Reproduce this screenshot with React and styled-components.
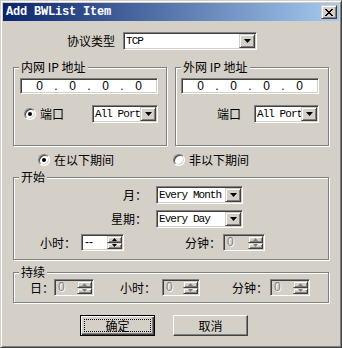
import React from 'react';
import styled, { createGlobalStyle, css } from 'styled-components';

const CJK = `"Noto Sans CJK SC", "Liberation Sans", sans-serif`;
const MONO = `"Liberation Mono", "Noto Sans CJK SC", monospace`;

const GlobalStyle = createGlobalStyle`
  html, body {
    margin: 0;
    padding: 0;
    background: #d4d0c8;
  }
`;

const raised = css`
  border: 1px solid;
  border-color: #d4d0c8 #404040 #404040 #d4d0c8;
  box-shadow: inset 1px 1px 0 #fff, inset -1px -1px 0 #808080;
`;

const sunken = css`
  border: 1px solid;
  border-color: #808080 #fff #fff #808080;
  box-shadow: inset 1px 1px 0 #404040, inset -1px -1px 0 #d4d0c8;
`;

const Window = styled.div`
  box-sizing: border-box;
  width: 342px;
  height: 348px;
  padding: 2px;
  display: flex;
  flex-direction: column;
  background: #d4d0c8;
  border: 1px solid;
  border-color: #d4d0c8 #404040 #404040 #d4d0c8;
  box-shadow: inset 1px 1px 0 #fff, inset -1px -1px 0 #808080;
  color: #000;
  font-family: ${CJK};
  font-size: 12px;
`;

const TitleBar = styled.div`
  height: 18px;
  display: flex;
  align-items: center;
  justify-content: space-between;
  padding: 0 2px 0 3px;
  background: linear-gradient(to right, #0a246a, #a6caf0);
`;

const Title = styled.span`
  font-family: ${MONO};
  font-weight: bold;
  font-size: 12px;
  letter-spacing: -0.2px;
  color: #fff;
`;

const CloseButton = styled.div`
  box-sizing: border-box;
  width: 16px;
  height: 14px;
  display: flex;
  align-items: center;
  justify-content: center;
  background: #d4d0c8;
  ${raised};
`;

const Body = styled.div`
  display: flex;
  flex-direction: column;
  padding: 0 10px;
`;

const ProtocolRow = styled.div`
  display: flex;
  align-items: center;
  gap: 8px;
  height: 18px;
  margin-top: 11px;
  padding-left: 54px;
`;

const Text = styled.span`
  font-family: ${CJK};
  font-size: 12px;
  line-height: 14px;
  white-space: nowrap;
`;

const Label = styled(Text)`
  flex: none;
  width: ${p => (p.$w ? `${p.$w}px` : 'auto')};
  text-align: ${p => p.$align || 'left'};
  margin-left: ${p => p.$ml || 0}px;
`;

const Combo = styled.div`
  box-sizing: border-box;
  flex: none;
  width: ${p => p.$w}px;
  height: 18px;
  padding: 1px;
  display: flex;
  align-items: stretch;
  background: #fff;
  margin-left: ${p => p.$ml || 0}px;
  ${sunken};
`;

const ComboText = styled.span`
  flex: 1;
  min-width: 0;
  overflow: hidden;
  padding-left: 1px;
  font-family: ${MONO};
  font-size: 11px;
  line-height: 14px;
  letter-spacing: -0.95px;
  white-space: nowrap;
`;

const ArrowButton = styled.span`
  box-sizing: border-box;
  flex: none;
  width: 16px;
  display: flex;
  align-items: center;
  justify-content: center;
  background: #d4d0c8;
  ${raised};
`;

const GroupsRow = styled.div`
  display: flex;
  gap: 8px;
  margin-top: 10px;
`;

const Group = styled.fieldset`
  box-sizing: border-box;
  flex: ${p => (p.$flex ? '1' : 'none')};
  height: ${p => p.$h}px;
  min-width: 0;
  margin: ${p => p.$mt || 0}px 0 0 0;
  padding: 0;
  border: 1px solid #808080;
  box-shadow: inset 1px 1px 0 #fff, 1px 1px 0 #fff;
`;

const Legend = styled.legend`
  margin-left: 5px;
  padding: 0 2px;
  font-family: ${CJK};
  font-size: 12px;
  line-height: 14px;
  background: #d4d0c8;
`;

const GroupInner = styled.div`
  display: flex;
  flex-direction: column;
  padding: ${p => p.$pad};
  gap: ${p => p.$gap || 0}px;
`;

const IpBox = styled.div`
  box-sizing: border-box;
  width: 138px;
  height: 16px;
  display: flex;
  align-items: center;
  padding: 0 4px;
  background: #fff;
  font-family: "Liberation Sans", sans-serif;
  font-size: 12px;
  line-height: 12px;
  ${sunken};
`;

const Octet = styled.span`
  flex: 1;
  text-align: center;
`;

const Dot = styled.span`
  width: 4px;
  text-align: center;
`;

const PortRow = styled.div`
  width: 138px;
  height: 18px;
  margin-top: 11px;
  display: flex;
  align-items: center;
  justify-content: ${p => (p.$end ? 'flex-end' : 'flex-start')};
  padding-left: ${p => p.$pl || 0}px;
  box-sizing: border-box;
`;

const RadioItem = styled.label`
  display: flex;
  align-items: center;
  gap: 4px;
  width: ${p => (p.$w ? `${p.$w}px` : 'auto')};
  flex: none;
`;

const RadioDot = styled.span`
  box-sizing: border-box;
  width: 12px;
  height: 12px;
  border-radius: 50%;
  display: flex;
  align-items: center;
  justify-content: center;
  background: #fff;
  ${sunken};

  &::after {
    content: '';
    display: ${p => (p.$checked ? 'block' : 'none')};
    width: 4px;
    height: 4px;
    border-radius: 50%;
    background: #000;
  }
`;

const RangeRow = styled.div`
  display: flex;
  align-items: center;
  height: 13px;
  margin-top: 7px;
  padding-left: 25px;
`;

const FieldRow = styled.div`
  display: flex;
  align-items: center;
  height: ${p => p.$h || 18}px;
  padding-left: ${p => p.$pl || 0}px;
`;

const SpinField = styled.div`
  box-sizing: border-box;
  flex: none;
  width: ${p => p.$w}px;
  height: 17px;
  padding: 1px;
  display: flex;
  margin-left: ${p => p.$ml || 0}px;
  background: ${p => (p.$disabled ? '#d4d0c8' : '#fff')};
  ${sunken};
`;

const SpinText = styled.span`
  flex: 1;
  padding-left: 2px;
  font-family: "Liberation Sans", sans-serif;
  font-size: 12px;
  line-height: 13px;
  color: ${p => (p.$disabled ? '#808080' : '#000')};
  text-shadow: ${p => (p.$disabled ? '1px 1px 0 #fff' : 'none')};
`;

const SpinButtons = styled.span`
  width: 15px;
  display: flex;
  flex-direction: column;
`;

const SpinHalf = styled.span`
  box-sizing: border-box;
  flex: 1;
  display: flex;
  align-items: center;
  justify-content: center;
  background: #d4d0c8;
  ${raised};
`;

const ButtonRow = styled.div`
  display: flex;
  gap: 18px;
  margin-top: 12px;
  padding-left: 67px;
`;

const PushButton = styled.button`
  box-sizing: border-box;
  width: 75px;
  height: 21px;
  padding: 0;
  display: flex;
  align-items: center;
  justify-content: center;
  background: #d4d0c8;
  font-family: ${CJK};
  font-size: 12px;
  color: #000;
  border: 1px solid;
  border-color: #fff #404040 #404040 #fff;
  box-shadow: inset -1px -1px 0 #808080;

  ${p =>
    p.$default &&
    css`
      border-color: #000;
      box-shadow: inset 1px 1px 0 #fff, inset -1px -1px 0 #404040,
        inset -2px -2px 0 #808080;
    `}
`;

const FocusRing = styled.span`
  box-sizing: border-box;
  width: 67px;
  height: 13px;
  display: flex;
  align-items: center;
  justify-content: center;
  border: 1px dotted #000;
  line-height: 12px;
`;

function DownArrow() {
  return (
    <svg width="7" height="4" viewBox="0 0 7 4">
      <polygon points="0,0 7,0 3.5,4" fill="#000" />
    </svg>
  );
}

function SmallArrow({ up, disabled }) {
  const color = disabled ? '#808080' : '#000';
  return (
    <svg width="5" height="3" viewBox="0 0 5 3">
      <polygon points={up ? '0,3 5,3 2.5,0' : '0,0 5,0 2.5,3'} fill={color} />
    </svg>
  );
}

function Select({ value, width, ml }) {
  return (
    <Combo $w={width} $ml={ml}>
      <ComboText>{value}</ComboText>
      <ArrowButton>
        <DownArrow />
      </ArrowButton>
    </Combo>
  );
}

function Spinner({ value, width, disabled, ml }) {
  return (
    <SpinField $w={width} $disabled={disabled} $ml={ml}>
      <SpinText $disabled={disabled}>{value}</SpinText>
      <SpinButtons>
        <SpinHalf>
          <SmallArrow up disabled={disabled} />
        </SpinHalf>
        <SpinHalf>
          <SmallArrow disabled={disabled} />
        </SpinHalf>
      </SpinButtons>
    </SpinField>
  );
}

function IpAddress() {
  return (
    <IpBox>
      <Octet>0</Octet>
      <Dot>.</Dot>
      <Octet>0</Octet>
      <Dot>.</Dot>
      <Octet>0</Octet>
      <Dot>.</Dot>
      <Octet>0</Octet>
    </IpBox>
  );
}

export default function App() {
  return (
    <>
      <GlobalStyle />
      <Window>
        <TitleBar>
          <Title>Add BWList Item</Title>
          <CloseButton>
            <svg width="8" height="7" viewBox="0 0 8 7">
              <path d="M0 0 L7 7 M1 0 L8 7 M7 0 L0 7 M8 0 L1 7" stroke="#000" strokeWidth="1" />
            </svg>
          </CloseButton>
        </TitleBar>

        <Body>
          <ProtocolRow>
            <Label>协议类型</Label>
            <Select value="TCP" width={134} />
          </ProtocolRow>

          <GroupsRow>
            <Group $flex $h={86}>
              <Legend>内网 IP 地址</Legend>
              <GroupInner $pad="4px 0 0 6px">
                <IpAddress />
                <PortRow $pl={4}>
                  <RadioItem $w={68}>
                    <RadioDot $checked />
                    <Text>端口</Text>
                  </RadioItem>
                  <Select value="All Port" width={66} />
                </PortRow>
              </GroupInner>
            </Group>
            <Group $flex $h={86}>
              <Legend>外网 IP 地址</Legend>
              <GroupInner $pad="4px 0 0 5px">
                <IpAddress />
                <PortRow $end>
                  <Label>端口</Label>
                  <Select value="All Port" width={65} ml={13} />
                </PortRow>
              </GroupInner>
            </Group>
          </GroupsRow>

          <RangeRow>
            <RadioItem $w={135}>
              <RadioDot $checked />
              <Text>在以下期间</Text>
            </RadioItem>
            <RadioItem>
              <RadioDot />
              <Text>非以下期间</Text>
            </RadioItem>
          </RangeRow>

          <Group $h={90} $mt={4}>
            <Legend>开始</Legend>
            <GroupInner $pad="2px 0 0 0" $gap={6}>
              <FieldRow>
                <Label $w={133} $align="right">月：</Label>
                <Select value="Every Month" width={87} ml={9} />
              </FieldRow>
              <FieldRow>
                <Label $w={133} $align="right">星期：</Label>
                <Select value="Every Day" width={87} ml={9} />
              </FieldRow>
              <FieldRow $h={17} $pl={26}>
                <Label>小时：</Label>
                <Spinner value="--" width={43} ml={5} />
                <Label $ml={61}>分钟：</Label>
                <Spinner value="0" width={42} ml={2} disabled />
              </FieldRow>
            </GroupInner>
          </Group>

          <Group $h={38} $mt={5}>
            <Legend>持续</Legend>
            <GroupInner $pad="0">
              <FieldRow $h={17} $pl={16}>
                <Label>日：</Label>
                <Spinner value="0" width={40} disabled />
                <Label $ml={26}>小时：</Label>
                <Spinner value="0" width={38} ml={6} disabled />
                <Label $ml={32}>分钟：</Label>
                <Spinner value="0" width={40} ml={2} disabled />
              </FieldRow>
            </GroupInner>
          </Group>

          <ButtonRow>
            <PushButton $default>
              <FocusRing>确定</FocusRing>
            </PushButton>
            <PushButton>取消</PushButton>
          </ButtonRow>
        </Body>
      </Window>
    </>
  );
}
